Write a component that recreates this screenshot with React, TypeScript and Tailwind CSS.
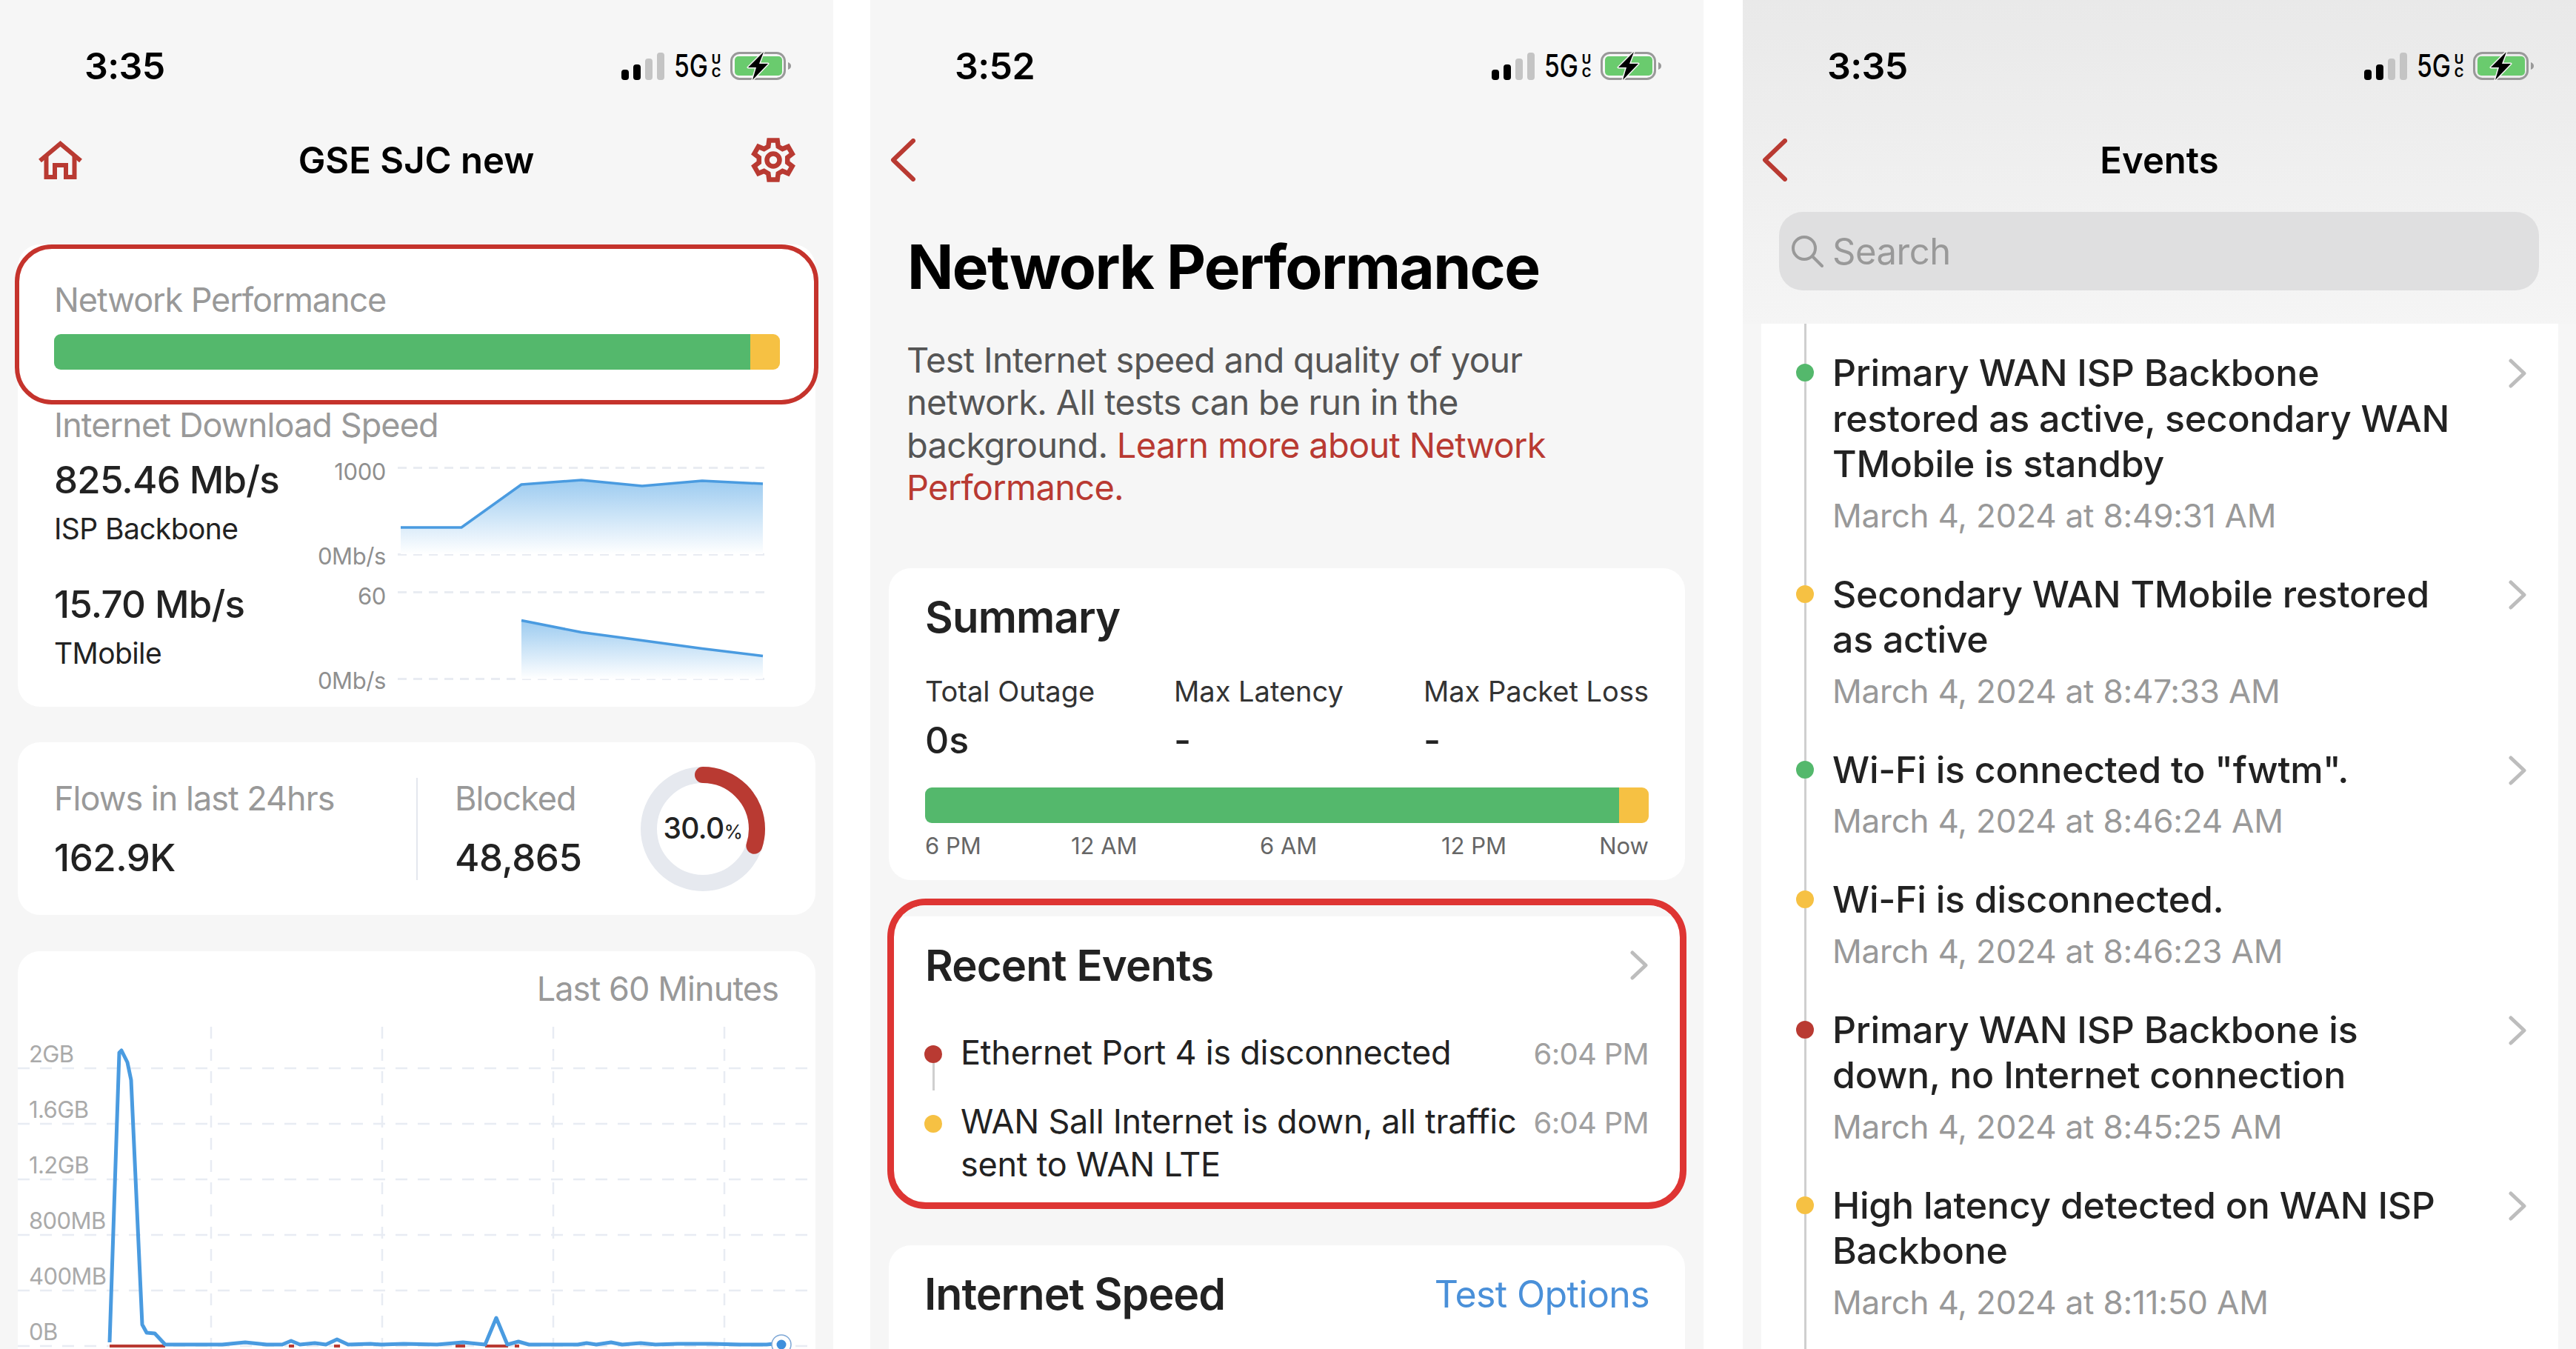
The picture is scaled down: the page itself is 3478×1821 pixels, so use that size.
import type { ReactNode } from "react";

const RED = "#B93A32";
const GREEN = "#54B86C";
const YELLOW = "#F6C143";

function gearPath(): string {
  const cx = 31;
  const cy = 30;
  const parts: string[] = [];
  for (let i = 0; i < 6; i++) {
    const a = -90 + i * 60;
    const pts: [number, number][] = [
      [19.5, a - 20],
      [27, a - 12],
      [27, a + 12],
      [19.5, a + 20],
    ];
    for (const [r, deg] of pts) {
      const rad = (deg * Math.PI) / 180;
      parts.push(`${(cx + r * Math.cos(rad)).toFixed(1)} ${(cy + r * Math.sin(rad)).toFixed(1)}`);
    }
  }
  return `M${parts.join(" L")} Z`;
}

function StatusBar({ time }: { time: string }) {
  return (
    <div className="mt-[60px] flex h-[58px] items-center justify-between pl-[114px] pr-[56px] text-black">
      <span className="text-[50px] font-semibold leading-none tracking-[-0.6px]">{time}</span>
      <div className="flex items-center">
        <svg width="58" height="38" viewBox="0 0 58 38">
          <rect x="0" y="24" width="10" height="14" rx="4" fill="#000" />
          <rect x="16" y="17" width="10" height="21" rx="4" fill="#000" />
          <rect x="32" y="9" width="10" height="29" rx="4" fill="#c4c4c4" />
          <rect x="48" y="1" width="10" height="37" rx="4" fill="#c4c4c4" />
        </svg>
        <span className="ml-[13px] w-[46px] origin-left scale-x-[0.8] text-[42px] font-medium leading-none">5G</span>
        <span className="ml-[4px] flex w-[14px] flex-col items-center text-[17px] font-bold leading-[18px]">
          <span>U</span>
          <span>C</span>
        </span>
        <svg className="ml-[12px]" width="83" height="40" viewBox="0 0 83 40">
          <rect x="1.5" y="2.5" width="72" height="35" rx="11" fill="none" stroke="#999" strokeWidth="3" />
          <rect x="6" y="7" width="64" height="26" rx="5" fill="#6ACB6E" />
          <path d="M78 15 C81 16 82 18 82 20 C82 22 81 24 78 25 Z" fill="#999" />
          <path d="M45 1 L24 22 H35 L30 39 L51 17 H39 Z" fill="#000" stroke="#f6f6f6" strokeWidth="3" paintOrder="stroke" strokeLinejoin="round" />
        </svg>
      </div>
    </div>
  );
}

function BackIcon() {
  return (
    <svg width="34" height="58" viewBox="0 0 34 58" fill="none" stroke={RED} strokeWidth="6" strokeLinecap="round" strokeLinejoin="round">
      <path d="M31 3 L4 29 L31 55" />
    </svg>
  );
}

function Chevron({ className }: { className?: string }) {
  return (
    <svg className={className} width="25" height="40" viewBox="0 0 25 40" fill="none" stroke="#bdbdbd" strokeWidth="5" strokeLinecap="round" strokeLinejoin="round">
      <path d="M3 3 L21 20 L3 37" />
    </svg>
  );
}

function Bar() {
  return (
    <div className="flex h-[48px] overflow-hidden rounded-[9px]">
      <div className="flex-1 bg-[#54B86C]" />
      <div className="w-[40px] bg-[#F6C143]" />
    </div>
  );
}

function Card({ className, children }: { className?: string; children: ReactNode }) {
  return <div className={`rounded-[30px] bg-white ${className ?? ""}`}>{children}</div>;
}

function SpeedRow({ value, name, top, label, fillPts, linePts, gradId }: {
  value: string;
  name: string;
  top: number;
  label: string;
  fillPts: string;
  linePts: string;
  gradId: string;
}) {
  const gridTop = top + 21.5;
  const gridBottom = top + 138.5;
  return (
    <div className="flex h-[167.5px]">
      <div className="w-[330px] shrink-0 whitespace-nowrap pt-[8px]">
        <div className="text-[51px] font-medium leading-[60px] tracking-[-0.8px] text-[#222]">{value}</div>
        <div className="mt-[12px] text-[39px] leading-[48px] tracking-[-0.6px] text-[#222]">{name}</div>
      </div>
      <div className="mt-[7px] flex h-[154px] w-[118px] shrink-0 flex-col justify-between text-right text-[31px] leading-[40px] tracking-[-0.4px] text-[#8f8f8f]">
        <span>{label}</span>
        <span>0Mb/s</span>
      </div>
      <svg className="ml-[16px] shrink-0" width="495" height="150" viewBox={`537 ${top} 495 150`}>
        <defs>
          <linearGradient id={gradId} x1="0" y1="0" x2="0" y2="1">
            <stop offset="0" stopColor="#9CCBF0" />
            <stop offset="1" stopColor="#ffffff" />
          </linearGradient>
        </defs>
        <line x1="537" x2="1032" y1={gridTop} y2={gridTop} stroke="#e9ecf2" strokeWidth="3" strokeDasharray="12 9" />
        <line x1="537" x2="1032" y1={gridBottom} y2={gridBottom} stroke="#e9ecf2" strokeWidth="3" strokeDasharray="12 9" />
        <polygon points={fillPts} fill={`url(#${gradId})`} />
        <polyline points={linePts} fill="none" stroke="#4A9BE0" strokeWidth="3.5" strokeLinejoin="round" />
      </svg>
    </div>
  );
}

function TrafficChart() {
  const yTicks = [
    { y: 1442, label: "2GB" },
    { y: 1517, label: "1.6GB" },
    { y: 1592, label: "1.2GB" },
    { y: 1667, label: "800MB" },
    { y: 1742, label: "400MB" },
    { y: 1817, label: "0B" },
  ];
  const line =
    "148,1812 161,1421 164,1418 172,1434 177,1458 192,1788 198,1799 209,1800 223,1815 300,1815 331,1812 360,1815 381,1815 393,1810 405,1815 425,1813 440,1815 455,1808 470,1815 500,1814 515,1815 545,1814 590,1815 625,1812 655,1815 670,1779 685,1815 700,1811 714,1815 780,1815 792,1813 805,1815 825,1812 840,1815 865,1813 885,1815 915,1814 960,1814 1000,1815 1035,1815 1055,1813";
  return (
    <svg className="mt-[7px]" width="1076" height="451" viewBox="24 1370 1076 451">
      {yTicks.map((t) => (
        <g key={t.label}>
          <line x1="24" x2="1090" y1={t.y} y2={t.y} stroke="#e8ecf3" strokeWidth="2.5" strokeDasharray="16 14" />
          <text x="39" y={t.y - 8} fontSize="31" letterSpacing="-0.6" fill="#aaaaaa">{t.label}</text>
        </g>
      ))}
      {[285, 516, 747, 978].map((x) => (
        <line key={x} x1={x} x2={x} y1="1386" y2="1821" stroke="#e8ecf3" strokeWidth="2.5" strokeDasharray="16 14" />
      ))}
      <path d="M148 1817 H223 M390 1817 H397 M451 1817 H459 M615 1817 H628 M655 1817 H686 M695 1817 H701" stroke={RED} strokeWidth="4" fill="none" />
      <polyline points={line} fill="none" stroke="#4A9BE0" strokeWidth="5" strokeLinejoin="round" />
      <circle cx="1055" cy="1815" r="13" fill="#fff" stroke="#7FA8D6" strokeWidth="1.5" />
      <circle cx="1055" cy="1815" r="6.5" fill="#3F8FDC" />
    </svg>
  );
}

function DashboardPanel() {
  return (
    <div className="h-[1821px] w-[1125px] shrink-0 overflow-hidden bg-[#f6f6f6]">
      <StatusBar time="3:35" />
      <div className="mt-[58px] flex h-[80px] items-center justify-between pl-[52px] pr-[50px]">
        <svg width="59" height="52" viewBox="0 0 59 52" fill="none" stroke={RED} strokeWidth="6">
          <path d="M2 27 L29.5 4 L57 27" />
          <path d="M10.5 21 V49 H22 V33 H37 V49 H48.5 V21" />
        </svg>
        <span className="text-[49px] font-semibold leading-none text-black">GSE SJC new</span>
        <svg width="62" height="60" viewBox="0 0 62 60" fill="none" stroke={RED} strokeWidth="6.5" strokeLinejoin="miter">
          <path d={gearPath()} />
          <circle cx="31" cy="30" r="8.5" />
        </svg>
      </div>

      <Card className="mx-[24px] mt-[74px] pb-[9px]">
        <div className="-mx-[4px] rounded-[50px] border-[6px] border-[#C5332C] pb-[41px] pl-[47px] pr-[46px] pt-[41px]">
          <div className="text-[45px] leading-[56px] tracking-[-1.1px] text-[#999]">Network Performance</div>
          <div className="mt-[18px]">
            <Bar />
          </div>
        </div>
        <div className="pl-[49px] pr-[68px]">
          <div className="whitespace-nowrap text-[45px] leading-[56px] tracking-[-0.9px] text-[#999]">Internet Download Speed</div>
          <div className="mt-[8px]">
            <SpeedRow
              value="825.46 Mb/s"
              name="ISP Backbone"
              top={610}
              label="1000"
              gradId="grad-a"
              fillPts="541,712 623,712 704,654 785,648 867,656 948,649 1030,653 1030,748 541,748"
              linePts="541,712 623,712 704,654 785,648 867,656 948,649 1030,653"
            />
            <SpeedRow
              value="15.70 Mb/s"
              name="TMobile"
              top={777.5}
              label="60"
              gradId="grad-b"
              fillPts="704,837 785,853 867,864 948,875 1030,885 1030,916 704,916"
              linePts="704,837 785,853 867,864 948,875 1030,885"
            />
          </div>
        </div>
      </Card>

      <Card className="mx-[24px] mt-[48px] flex h-[233px] items-center pl-[49px] pr-[68px]">
        <div className="w-[489px]">
          <div className="text-[45px] leading-[56px] tracking-[-1px] text-[#999]">Flows in last 24hrs</div>
          <div className="mt-[22px] text-[51px] font-medium leading-[60px] tracking-[-0.5px] text-[#222]">162.9K</div>
        </div>
        <div className="h-[138px] w-[2px] bg-[#e4e7ee]" />
        <div className="ml-[50px]">
          <div className="text-[45px] leading-[56px] tracking-[-1px] text-[#999]">Blocked</div>
          <div className="mt-[22px] text-[51px] font-medium leading-[60px] tracking-[-0.5px] text-[#222]">48,865</div>
        </div>
        <svg className="ml-auto" width="168" height="168" viewBox="0 0 168 168">
          <circle cx="84" cy="84" r="73" fill="none" stroke="#E6E9EF" strokeWidth="22" />
          <circle cx="84" cy="84" r="73" fill="none" stroke={RED} strokeWidth="22" strokeLinecap="round" strokeDasharray="137.6 458.7" transform="rotate(-90 84 84)" />
          <text x="84" y="97" textAnchor="middle" fontSize="39" fontWeight="500" letterSpacing="-0.6" fill="#222">
            30.0<tspan fontSize="26" fontWeight="400">%</tspan>
          </text>
        </svg>
      </Card>

      <div className="mx-[24px] mt-[49px] rounded-t-[30px] bg-white">
        <div className="pr-[50px] pt-[23px] text-right text-[45px] leading-[56px] tracking-[-0.9px] text-[#999]">Last 60 Minutes</div>
        <TrafficChart />
      </div>
    </div>
  );
}

function EventRow({ color, time, last, children }: { color: string; time: string; last?: boolean; children: ReactNode }) {
  return (
    <div className={`flex items-start ${last ? "" : "pb-[33px]"}`}>
      <div className={`-ml-[1px] flex w-[24px] shrink-0 flex-col items-center self-stretch ${last ? "mt-[20px]" : "mt-[19px]"}`}>
        <div className="z-10 h-[24px] w-[24px] rounded-full" style={{ backgroundColor: color }} />
        {!last && <div className="-mb-[20px] w-[3px] flex-1 bg-[#cfcfcf]" />}
      </div>
      <div className="ml-[25px] flex-1 whitespace-nowrap text-[45px] leading-[58px] tracking-[-0.25px] text-[#222]">{children}</div>
      <div className="mt-[2px] whitespace-nowrap text-[40px] leading-[58px] tracking-[-0.7px] text-[#a0a0a0]">{time}</div>
    </div>
  );
}

function PerformancePanel() {
  return (
    <div className="ml-[50px] h-[1821px] w-[1125px] shrink-0 overflow-hidden bg-[#f6f6f6]">
      <StatusBar time="3:52" />
      <div className="mt-[58px] flex h-[80px] items-center pl-[27px]">
        <BackIcon />
      </div>
      <h1 className="mt-[57px] pl-[50px] text-[82px] font-bold leading-[96px] tracking-[-1.7px] text-black">Network Performance</h1>
      <p className="mt-[48px] pl-[49px] text-[47px] leading-[57.4px] tracking-[-0.7px] text-[#555]">
        Test Internet speed and quality of your
        <br />
        network. All tests can be run in the
        <br />
        background. <span className="text-[#B93A32]">Learn more about Network</span>
        <br />
        <span className="text-[#B93A32]">Performance.</span>
      </p>

      <Card className="mx-[25px] mt-[80px] h-[421px] pl-[49px] pr-[49px] pt-[30px]">
        <div className="text-[58px] font-semibold leading-[72px] tracking-[-0.8px] text-[#222]">Summary</div>
        <div className="mt-[40px] flex">
          {[
            { label: "Total Outage", value: "0s", w: "w-[336px]" },
            { label: "Max Latency", value: "-", w: "w-[337px]" },
            { label: "Max Packet Loss", value: "-", w: "flex-1" },
          ].map((s) => (
            <div key={s.label} className={`${s.w} whitespace-nowrap`}>
              <div className="text-[38px] leading-[48px] text-[#333]">{s.label}</div>
              <div className="mt-[12px] text-[50px] font-medium leading-[60px] text-[#222]">{s.value}</div>
            </div>
          ))}
        </div>
        <div className="mt-[34px]">
          <Bar />
        </div>
        <div className="mt-[11px] flex text-[31px] leading-[40px] text-[#666]">
          <span className="w-[197px]">6 PM</span>
          <span className="w-[255px]">12 AM</span>
          <span className="w-[245px]">6 AM</span>
          <span>12 PM</span>
          <span className="ml-auto">Now</span>
        </div>
      </Card>

      <div className="mx-[23px] mt-[25px] h-[419px] overflow-hidden rounded-[52px] border-[9px] border-[#DE3533] bg-white">
        <div className="h-[15px] bg-[#f6f6f6]" />
        <div className="px-[42px] pt-[30px]">
          <div className="flex items-center justify-between">
            <span className="text-[58px] font-semibold leading-[72px] tracking-[-0.8px] text-[#222]">Recent Events</span>
            <Chevron />
          </div>
          <div className="mt-[53px]">
            <EventRow color={RED} time="6:04 PM">Ethernet Port 4 is disconnected</EventRow>
            <EventRow color={YELLOW} time="6:04 PM" last>
              WAN Sall Internet is down, all traffic
              <br />
              sent to WAN LTE
            </EventRow>
          </div>
        </div>
      </div>

      <div className="mx-[25px] mt-[49px] flex h-[300px] items-start justify-between rounded-t-[30px] bg-white pl-[48px] pr-[48px] pt-[30px]">
        <span className="text-[59px] font-semibold leading-[72px] tracking-[-1px] text-[#222]">Internet Speed</span>
        <span className="text-[50px] leading-[72px] tracking-[-0.6px] text-[#4A90D9]">Test Options</span>
      </div>
    </div>
  );
}

const EVENTS = [
  { color: GREEN, title: "Primary WAN ISP Backbone\nrestored as active, secondary WAN\nTMobile is standby", date: "March 4, 2024 at 8:49:31 AM" },
  { color: YELLOW, title: "Secondary WAN TMobile restored\nas active", date: "March 4, 2024 at 8:47:33 AM" },
  { color: GREEN, title: 'Wi-Fi is connected to "fwtm".', date: "March 4, 2024 at 8:46:24 AM" },
  { color: YELLOW, title: "Wi-Fi is disconnected.", date: "March 4, 2024 at 8:46:23 AM", noChevron: true },
  { color: RED, title: "Primary WAN ISP Backbone is\ndown, no Internet connection", date: "March 4, 2024 at 8:45:25 AM" },
  { color: YELLOW, title: "High latency detected on WAN ISP\nBackbone", date: "March 4, 2024 at 8:11:50 AM" },
];

function EventsPanel() {
  return (
    <div className="ml-[53px] h-[1821px] w-[1125px] shrink-0 overflow-hidden bg-[#f6f6f6]">
      <div className="h-[437px] overflow-hidden bg-linear-to-b from-[#e9e9e9] to-[#f5f5f5]">
        <StatusBar time="3:35" />
        <div className="relative mt-[58px] flex h-[80px] items-center justify-center">
          <div className="absolute left-[26px] top-[11px]">
            <BackIcon />
          </div>
          <span className="text-[49px] font-semibold leading-none text-black">Events</span>
        </div>
        <div className="ml-[49px] mr-[50px] mt-[30px] flex h-[106px] items-center rounded-[32px] bg-[#dfdfe0] pl-[16px]">
          <svg width="44" height="44" viewBox="0 0 44 44" fill="none" stroke="#999" strokeWidth="4" strokeLinecap="round">
            <circle cx="18" cy="18" r="15" />
            <path d="M29 29 L42 42" />
          </svg>
          <span className="ml-[12px] text-[49px] leading-none tracking-[-0.5px] text-[#999]">Search</span>
        </div>
      </div>
      <div className="ml-[25px] mr-[24px] bg-white pt-[2px]">
        {EVENTS.map((e, i) => (
          <div key={e.date} className="flex">
            <div className={`ml-[47px] flex w-[24px] shrink-0 flex-col items-center ${i === 0 ? "-mt-[2px]" : ""}`}>
              <div className={`${i === 0 ? "h-[54px]" : "h-[52px]"} w-[3px] bg-[#cfcfcf]`} />
              <div className="h-[24px] w-[24px] rounded-full" style={{ backgroundColor: e.color }} />
              <div className="w-[3px] flex-1 bg-[#cfcfcf]" />
            </div>
            <div className={`ml-[25px] flex-1 pt-[34px] ${i === EVENTS.length - 1 ? "pb-[120px]" : "pb-[15px]"}`}>
              <div className="whitespace-pre-line text-[50px] font-medium leading-[61.5px] tracking-[-0.25px] text-[#222]">{e.title}</div>
              <div className="mt-[11px] text-[44px] leading-[54px] tracking-[-0.2px] text-[#999]">{e.date}</div>
            </div>
            {!e.noChevron && <Chevron className="ml-[10px] mr-[42px] mt-[45px] shrink-0" />}
          </div>
        ))}
      </div>
    </div>
  );
}

export default function App() {
  return (
    <div className="flex h-[1821px] w-[3478px] overflow-hidden bg-white font-['Inter',sans-serif]">
      <DashboardPanel />
      <PerformancePanel />
      <EventsPanel />
    </div>
  );
}
